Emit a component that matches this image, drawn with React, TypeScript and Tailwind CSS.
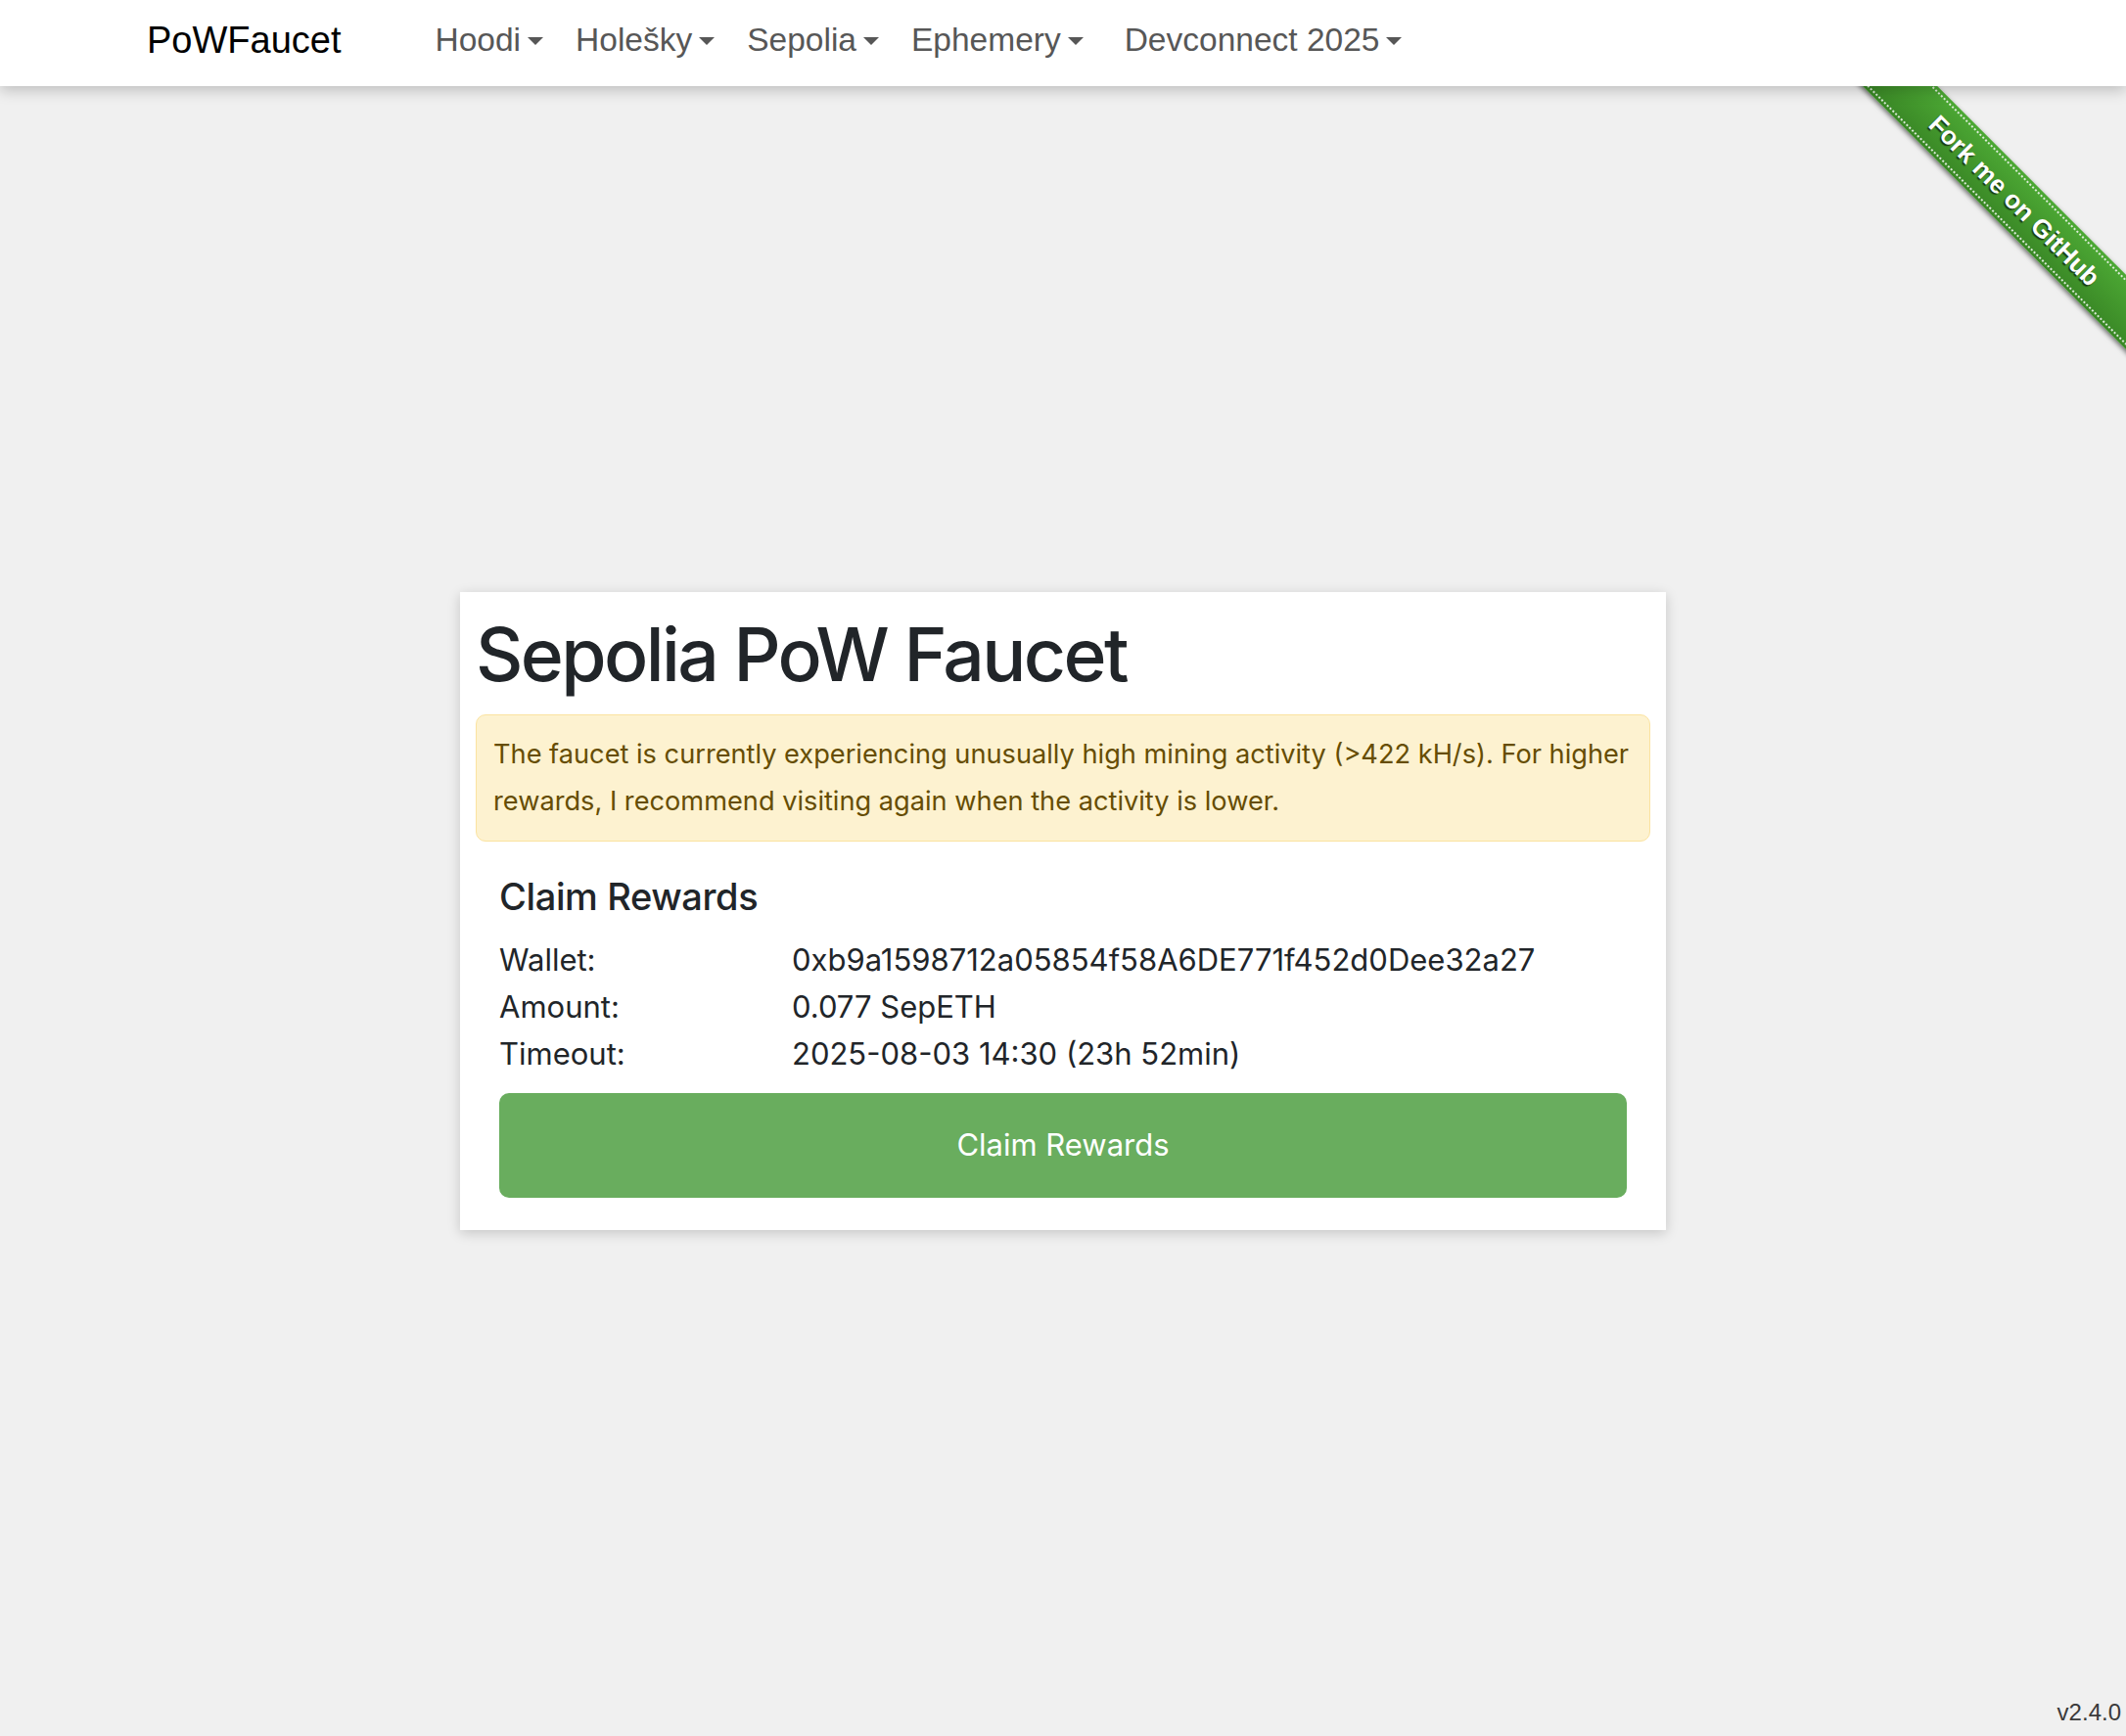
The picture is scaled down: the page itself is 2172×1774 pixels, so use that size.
import { ReactNode } from 'react';

const networks = ['Hoodi', 'Holešky', 'Sepolia', 'Ephemery'];

const rows = [
  { label: 'Wallet:', value: '0xb9a1598712a05854f58A6DE771f452d0Dee32a27' },
  { label: 'Amount:', value: '0.077 SepETH' },
  { label: 'Timeout:', value: '2025-08-03 14:30 (23h 52min)' },
];

const NavItem = ({ children, className = '' }: { children: ReactNode; className?: string }) => (
  <div className={`flex items-center text-[33.5px] text-[#575757] ${className}`}>
    <span>{children}</span>
    <span className="ml-[7px] mt-[2px] w-0 h-0 border-l-[8px] border-r-[8px] border-t-[8px] border-l-transparent border-r-transparent border-t-[#575757]" />
  </div>
);

const ForkRibbon = () => (
  <div className="absolute top-0 right-0 w-[400px] h-[400px] overflow-hidden pointer-events-none">
    <div className="absolute left-[-14px] top-[178px] w-[600px] h-[54px] rotate-45 bg-gradient-to-b from-[#4ca834] to-[#3a8826] shadow-[0_2px_5px_rgba(0,0,0,0.55)] flex items-center justify-center">
      <div className="absolute inset-x-0 top-[3px] border-t-2 border-dotted border-white/80" />
      <div className="absolute inset-x-0 bottom-[3px] border-t-2 border-dotted border-white/80" />
      <span className="font-['Liberation_Sans',Arial,sans-serif] font-bold text-[26px] text-white [text-shadow:0_2px_1px_rgba(0,0,0,0.6)]">
        Fork me on GitHub
      </span>
    </div>
  </div>
);

export default function App() {
  return (
    <div className="relative h-[1774px] flex flex-col bg-[#f0f0f0] overflow-hidden">
      <nav className="relative z-10 h-[88px] shrink-0 bg-white shadow-[0_4px_14px_rgba(0,0,0,0.22)] flex items-center pb-[6px] pl-[150px] font-['Liberation_Sans',Arial,sans-serif]">
        <div className="text-[38px] text-black">PoWFaucet</div>
        <div className="ml-[96px] flex items-center gap-[33px]">
          {networks.map((n) => (
            <NavItem key={n}>{n}</NavItem>
          ))}
          <NavItem className="ml-[9px]">Devconnect 2025</NavItem>
        </div>
      </nav>

      <ForkRibbon />

      <main className="flex-1 flex items-center justify-center font-['Inter',sans-serif] text-[#212529]">
        <div className="w-[1232px] bg-white p-4 shadow-[0_3px_12px_rgba(0,0,0,0.18)]">
          <h1 className="text-[75px] leading-[96px] font-medium tracking-[-0.035em] mb-[13px]">Sepolia PoW Faucet</h1>

          <div className="rounded-[10px] border border-[#fbe3a0] bg-[#fdf2d0] px-[17px] py-[16px] text-[27.2px] leading-[48px] text-[#664d03]">
            The faucet is currently experiencing unusually high mining activity (&gt;422 kH/s). For higher rewards, I
            recommend visiting again when the activity is lower.
          </div>

          <div className="px-[24px] pt-[34px] pb-[17px]">
            <h2 className="text-[38px] leading-[45px] font-medium tracking-[-0.01em] mb-[18px]">Claim Rewards</h2>
            <div className="text-[31px] leading-[48px]">
              {rows.map((r) => (
                <div key={r.label} className="flex">
                  <div className="w-[299px] shrink-0">{r.label}</div>
                  <div>{r.value}</div>
                </div>
              ))}
            </div>
            <button className="mt-[16px] w-full h-[107px] rounded-[10px] bg-[#69ad5e] text-white text-[31px]">
              Claim Rewards
            </button>
          </div>
        </div>
      </main>

      <div className="absolute right-[5px] bottom-[10px] font-['Liberation_Sans',Arial,sans-serif] text-[24px] leading-[28px] text-[#3a3a3a]">
        v2.4.0
      </div>
    </div>
  );
}
